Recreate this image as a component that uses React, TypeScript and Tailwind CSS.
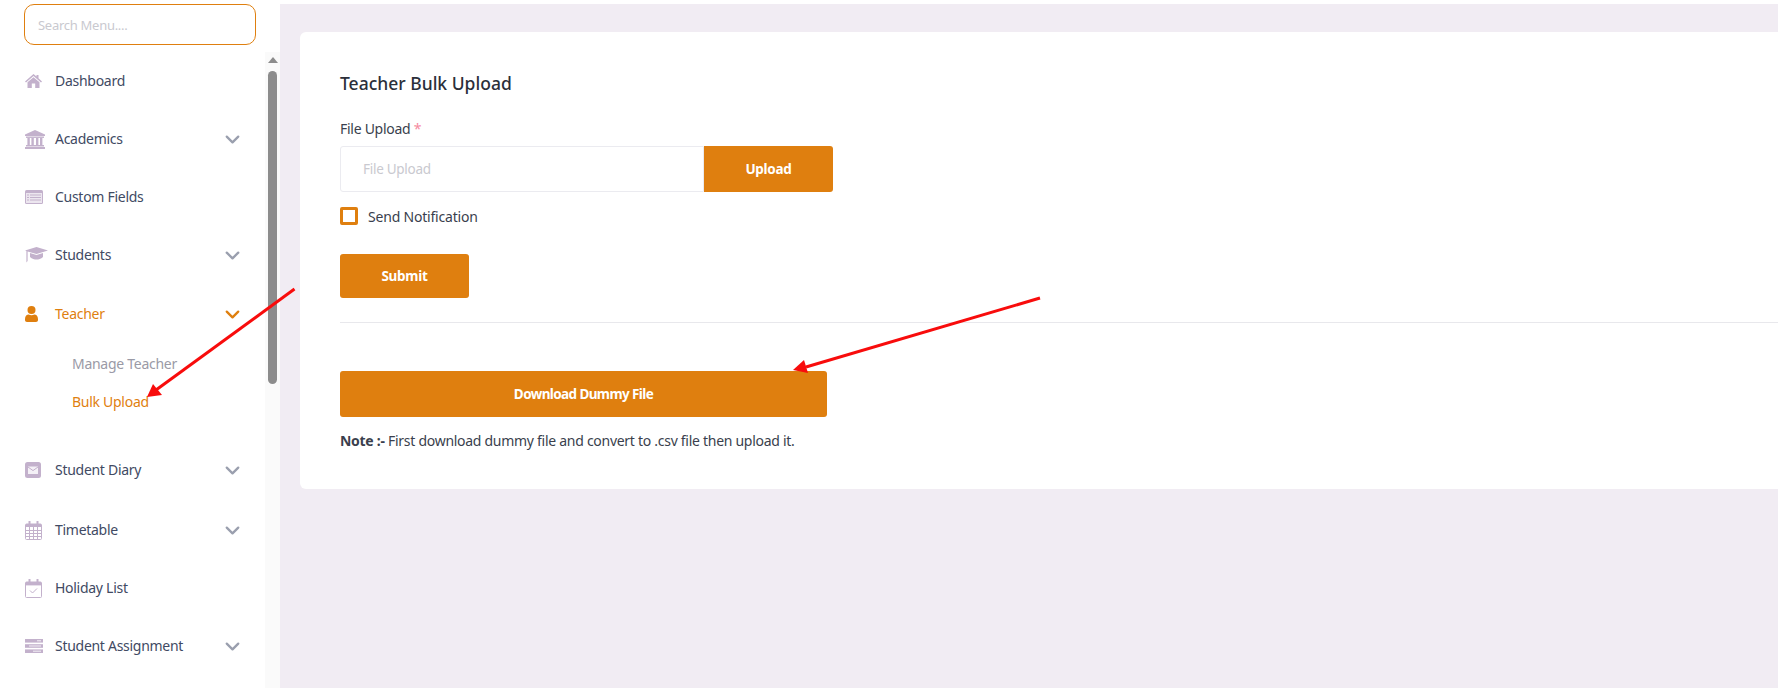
import { ReactNode } from "react";
import { FiChevronDown } from "react-icons/fi";

const FONT = "[font-family:'Noto_Sans','Open_Sans',sans-serif] tracking-[-0.28px]";

const HomeIcon = () => (
  <svg width="17" height="14" viewBox="0 0 17 14" fill="currentColor">
    <path d="M8.5 0 L11.5 2.6 V1 H13.5 V4.3 L17 7.4 L16 8.4 L8.5 2 L1 8.4 L0 7.4 Z" />
    <path d="M2.5 8.2 L8.5 3.2 L14.5 8.2 V14 H10.2 V9.6 H6.8 V14 H2.5 Z" />
  </svg>
);

const BankIcon = () => (
  <svg width="20" height="19" viewBox="0 0 20 19" fill="currentColor">
    <path d="M10 0 L20 4.5 V6 H0 V4.5 Z" />
    <rect x="1" y="6.5" width="18" height="1.4" />
    <rect x="2.4" y="8" width="2.4" height="7" />
    <rect x="6.4" y="8" width="2.4" height="7" />
    <rect x="11" y="8" width="2.4" height="7" />
    <rect x="15" y="8" width="2.4" height="7" />
    <rect x="1" y="15" width="18" height="1.5" />
    <rect x="0" y="17" width="20" height="2" />
  </svg>
);

const FieldsIcon = () => (
  <svg width="18" height="14" viewBox="0 0 18 14">
    <rect width="18" height="14" rx="1.5" fill="currentColor" />
    <rect x="1" y="3" width="16" height="10" fill="#ece6ef" />
    <path d="M2 5 H4 M5 5 H16 M2 7.5 H4 M5 7.5 H16 M2 10 H4 M5 10 H16" stroke="currentColor" strokeWidth="1.2" />
  </svg>
);

const CapIcon = () => (
  <svg width="23" height="16" viewBox="0 0 23 16" fill="currentColor">
    <path d="M11.5 0 L23 3.4 L11.5 7 L2.6 4.4 V14 L1.4 15.6 V4 L0 3.4 Z" />
    <path d="M5 6 L11.5 8 L18 6 V10 C16 12 13.5 12.6 11.5 12.6 C9.5 12.6 7 12 5 10 Z" />
  </svg>
);

const UserIcon = () => (
  <svg width="13" height="16" viewBox="0 0 13 16" fill="currentColor">
    <circle cx="6.5" cy="4" r="4" />
    <path d="M0 13 C0 10 2 8.6 3.6 8.6 C5.4 9.6 7.6 9.6 9.4 8.6 C11 8.6 13 10 13 13 V14 C13 15.2 12.2 16 11 16 H2 C0.8 16 0 15.2 0 14 Z" />
  </svg>
);

const MailIcon = () => (
  <svg width="16" height="16" viewBox="0 0 16 16">
    <rect width="16" height="16" rx="2.5" fill="currentColor" />
    <rect x="3" y="4.5" width="10" height="7.5" fill="#f4f0f6" />
    <path d="M3 5 L8 8.6 L13 5" fill="none" stroke="currentColor" strokeWidth="1" />
  </svg>
);

const TableIcon = () => (
  <svg width="17" height="19" viewBox="0 0 17 19" fill="none" stroke="currentColor">
    <rect x="0.5" y="3" width="16" height="15.5" rx="1" />
    <rect x="1" y="3" width="15" height="3" fill="currentColor" stroke="none" />
    <path d="M0.5 9.5 H16.5 M0.5 12.5 H16.5 M0.5 15.5 H16.5 M4.5 6 V18.5 M8.5 6 V18.5 M12.5 6 V18.5" />
    <path d="M4.5 0.5 V4.5 M12.5 0.5 V4.5" strokeWidth="2" strokeLinecap="round" />
  </svg>
);

const HolidayIcon = () => (
  <svg width="17" height="19" viewBox="0 0 17 19" fill="none" stroke="currentColor">
    <rect x="0.5" y="3" width="16" height="15.5" rx="1" />
    <rect x="1" y="3" width="15" height="3.4" fill="currentColor" stroke="none" />
    <path d="M4.5 0.5 V4.5 M12.5 0.5 V4.5" strokeWidth="2" strokeLinecap="round" />
    <path d="M5 11.5 L7.5 14 L12 9.5" />
  </svg>
);

const StackIcon = () => (
  <svg width="18" height="14" viewBox="0 0 18 14" fill="currentColor">
    <rect width="18" height="3.6" />
    <rect y="5.2" width="18" height="3.6" />
    <rect y="10.4" width="18" height="3.6" />
    <path d="M12 1.8 H16 M4 7 H16 M8 12.2 H16" stroke="#f4f0f6" strokeWidth="1" />
  </svg>
);

function NavItem({
  icon,
  label,
  hasChevron,
  active,
  className = "",
}: {
  icon: ReactNode;
  label: string;
  hasChevron?: boolean;
  active?: boolean;
  className?: string;
}) {
  return (
    <div
      className={`flex h-[58px] items-center pl-[25px] pr-[21px] text-[14px] ${
        active ? "text-[#df7f0f]" : "text-[#414a63]"
      } ${className}`}
    >
      <span
        className={`flex w-[30px] shrink-0 items-center ${
          active ? "text-[#df7f0f]" : "text-[#c3b1cc]"
        }`}
      >
        {icon}
      </span>
      <span className="-mt-0.5 flex-1">{label}</span>
      {hasChevron && (
        <FiChevronDown
          size={23}
          strokeWidth={2.4}
          className={active ? "text-[#df7f0f]" : "text-[#9a9fae]"}
        />
      )}
    </div>
  );
}

function Sidebar() {
  return (
    <aside className="flex h-full w-[280px] shrink-0 flex-col bg-white">
      <div className="pl-6 pt-1">
        <input
          placeholder="Search Menu...."
          className="h-[41px] w-[232px] rounded-[10px] border border-[#df7f0f] bg-white px-[13px] text-[13px] tracking-[-0.28px] outline-none placeholder:text-[#c9c9cf]"
        />
      </div>
      <div className="mt-[7px] flex min-h-0 flex-1">
        <nav className="w-[265px] overflow-hidden">
          <NavItem icon={<HomeIcon />} label="Dashboard" />
          <NavItem icon={<BankIcon />} label="Academics" hasChevron />
          <NavItem icon={<FieldsIcon />} label="Custom Fields" />
          <NavItem icon={<CapIcon />} label="Students" hasChevron />
          <NavItem icon={<UserIcon />} label="Teacher" hasChevron active className="mt-px" />
          <div className="mt-px pl-[72px] text-[14px]">
            <div className="flex h-[38px] items-center text-[#9a9aa6]">Manage Teacher</div>
            <div className="flex h-[38px] items-center text-[#df7f0f]">Bulk Upload</div>
          </div>
          <NavItem icon={<MailIcon />} label="Student Diary" hasChevron className="mt-[21px]" />
          <NavItem icon={<TableIcon />} label="Timetable" hasChevron className="mt-[2px]" />
          <NavItem icon={<HolidayIcon />} label="Holiday List" />
          <NavItem icon={<StackIcon />} label="Student Assignment" hasChevron />
        </nav>
        <div className="flex w-[15px] shrink-0 flex-col items-center bg-[#fafafa] px-[3px]">
          <div className="mt-[5px] h-0 w-0 border-x-[5px] border-b-[6px] border-x-transparent border-b-[#8c8c8c]" />
          <div className="mt-2 h-[313px] w-[9px] rounded-full bg-[#8c8c8c]" />
        </div>
      </div>
    </aside>
  );
}

function OrangeButton({ children, className = "" }: { children: ReactNode; className?: string }) {
  return (
    <button
      className={`flex items-center justify-center rounded-[3px] bg-[#df7f0f] text-[13.5px] font-bold text-white ${className}`}
    >
      {children}
    </button>
  );
}

function BulkUploadCard() {
  return (
    <section className="h-[457px] rounded-l-[6px] bg-white pl-10 pt-[39px]">
      <h1 className="text-[17.5px] font-medium leading-6 tracking-normal text-[#2b2f3a]">Teacher Bulk Upload</h1>
      <label className="mt-6 block text-[14px] leading-5 text-[#3a3f4d]">
        File Upload <span className="text-[#f58aa0]">*</span>
      </label>
      <div className="mt-[7px] flex h-[46px] w-[493px]">
        <div className="flex flex-1 items-center rounded-l-[3px] border border-[#ebebf0] pl-[22px] text-[13.5px] text-[#c9c9cf]">
          File Upload
        </div>
        <OrangeButton className="w-[129px] rounded-l-none">Upload</OrangeButton>
      </div>
      <div className="mt-[15px] flex h-[18px] items-center">
        <span className="h-[18px] w-[18px] rounded-[2px] border-[3px] border-[#df7f0f] bg-white" />
        <span className="ml-[10px] text-[14px] tracking-[-0.2px] text-[#3a3f4d]">Send Notification</span>
      </div>
      <OrangeButton className="mt-[29px] h-[44px] w-[129px]">Submit</OrangeButton>
      <div className="mt-[24px] h-px bg-[#e8e8ec]" />
      <OrangeButton className="mt-[48px] h-[46px] w-[487px] tracking-[-0.6px]">Download Dummy File</OrangeButton>
      <p className="mt-[14px] text-[14px] leading-5 text-[#3a3f4d]">
        <b className="font-bold">Note :-</b> First download dummy file and convert to .csv file then upload it.
      </p>
    </section>
  );
}

function Arrows() {
  return (
    <svg className="pointer-events-none absolute left-0 top-0" width="1778" height="688">
      <g fill="none" stroke="#f80c0c" strokeWidth="3">
        <path d="M294.5 289 L156 390" />
        <path d="M1040 298 L806 367" />
      </g>
      <g fill="#f80c0c">
        <path d="M147 397 L153 384 L162 395 Z" />
        <path d="M793 370 L804 360 L808 373 Z" />
      </g>
    </svg>
  );
}

export default function App() {
  return (
    <div className={`relative flex h-[688px] w-[1778px] overflow-hidden bg-white ${FONT}`}>
      <Sidebar />
      <main className="mt-1 min-w-0 flex-1 bg-[#f1ecf3] pl-5 pt-7">
        <BulkUploadCard />
      </main>
      <Arrows />
    </div>
  );
}
